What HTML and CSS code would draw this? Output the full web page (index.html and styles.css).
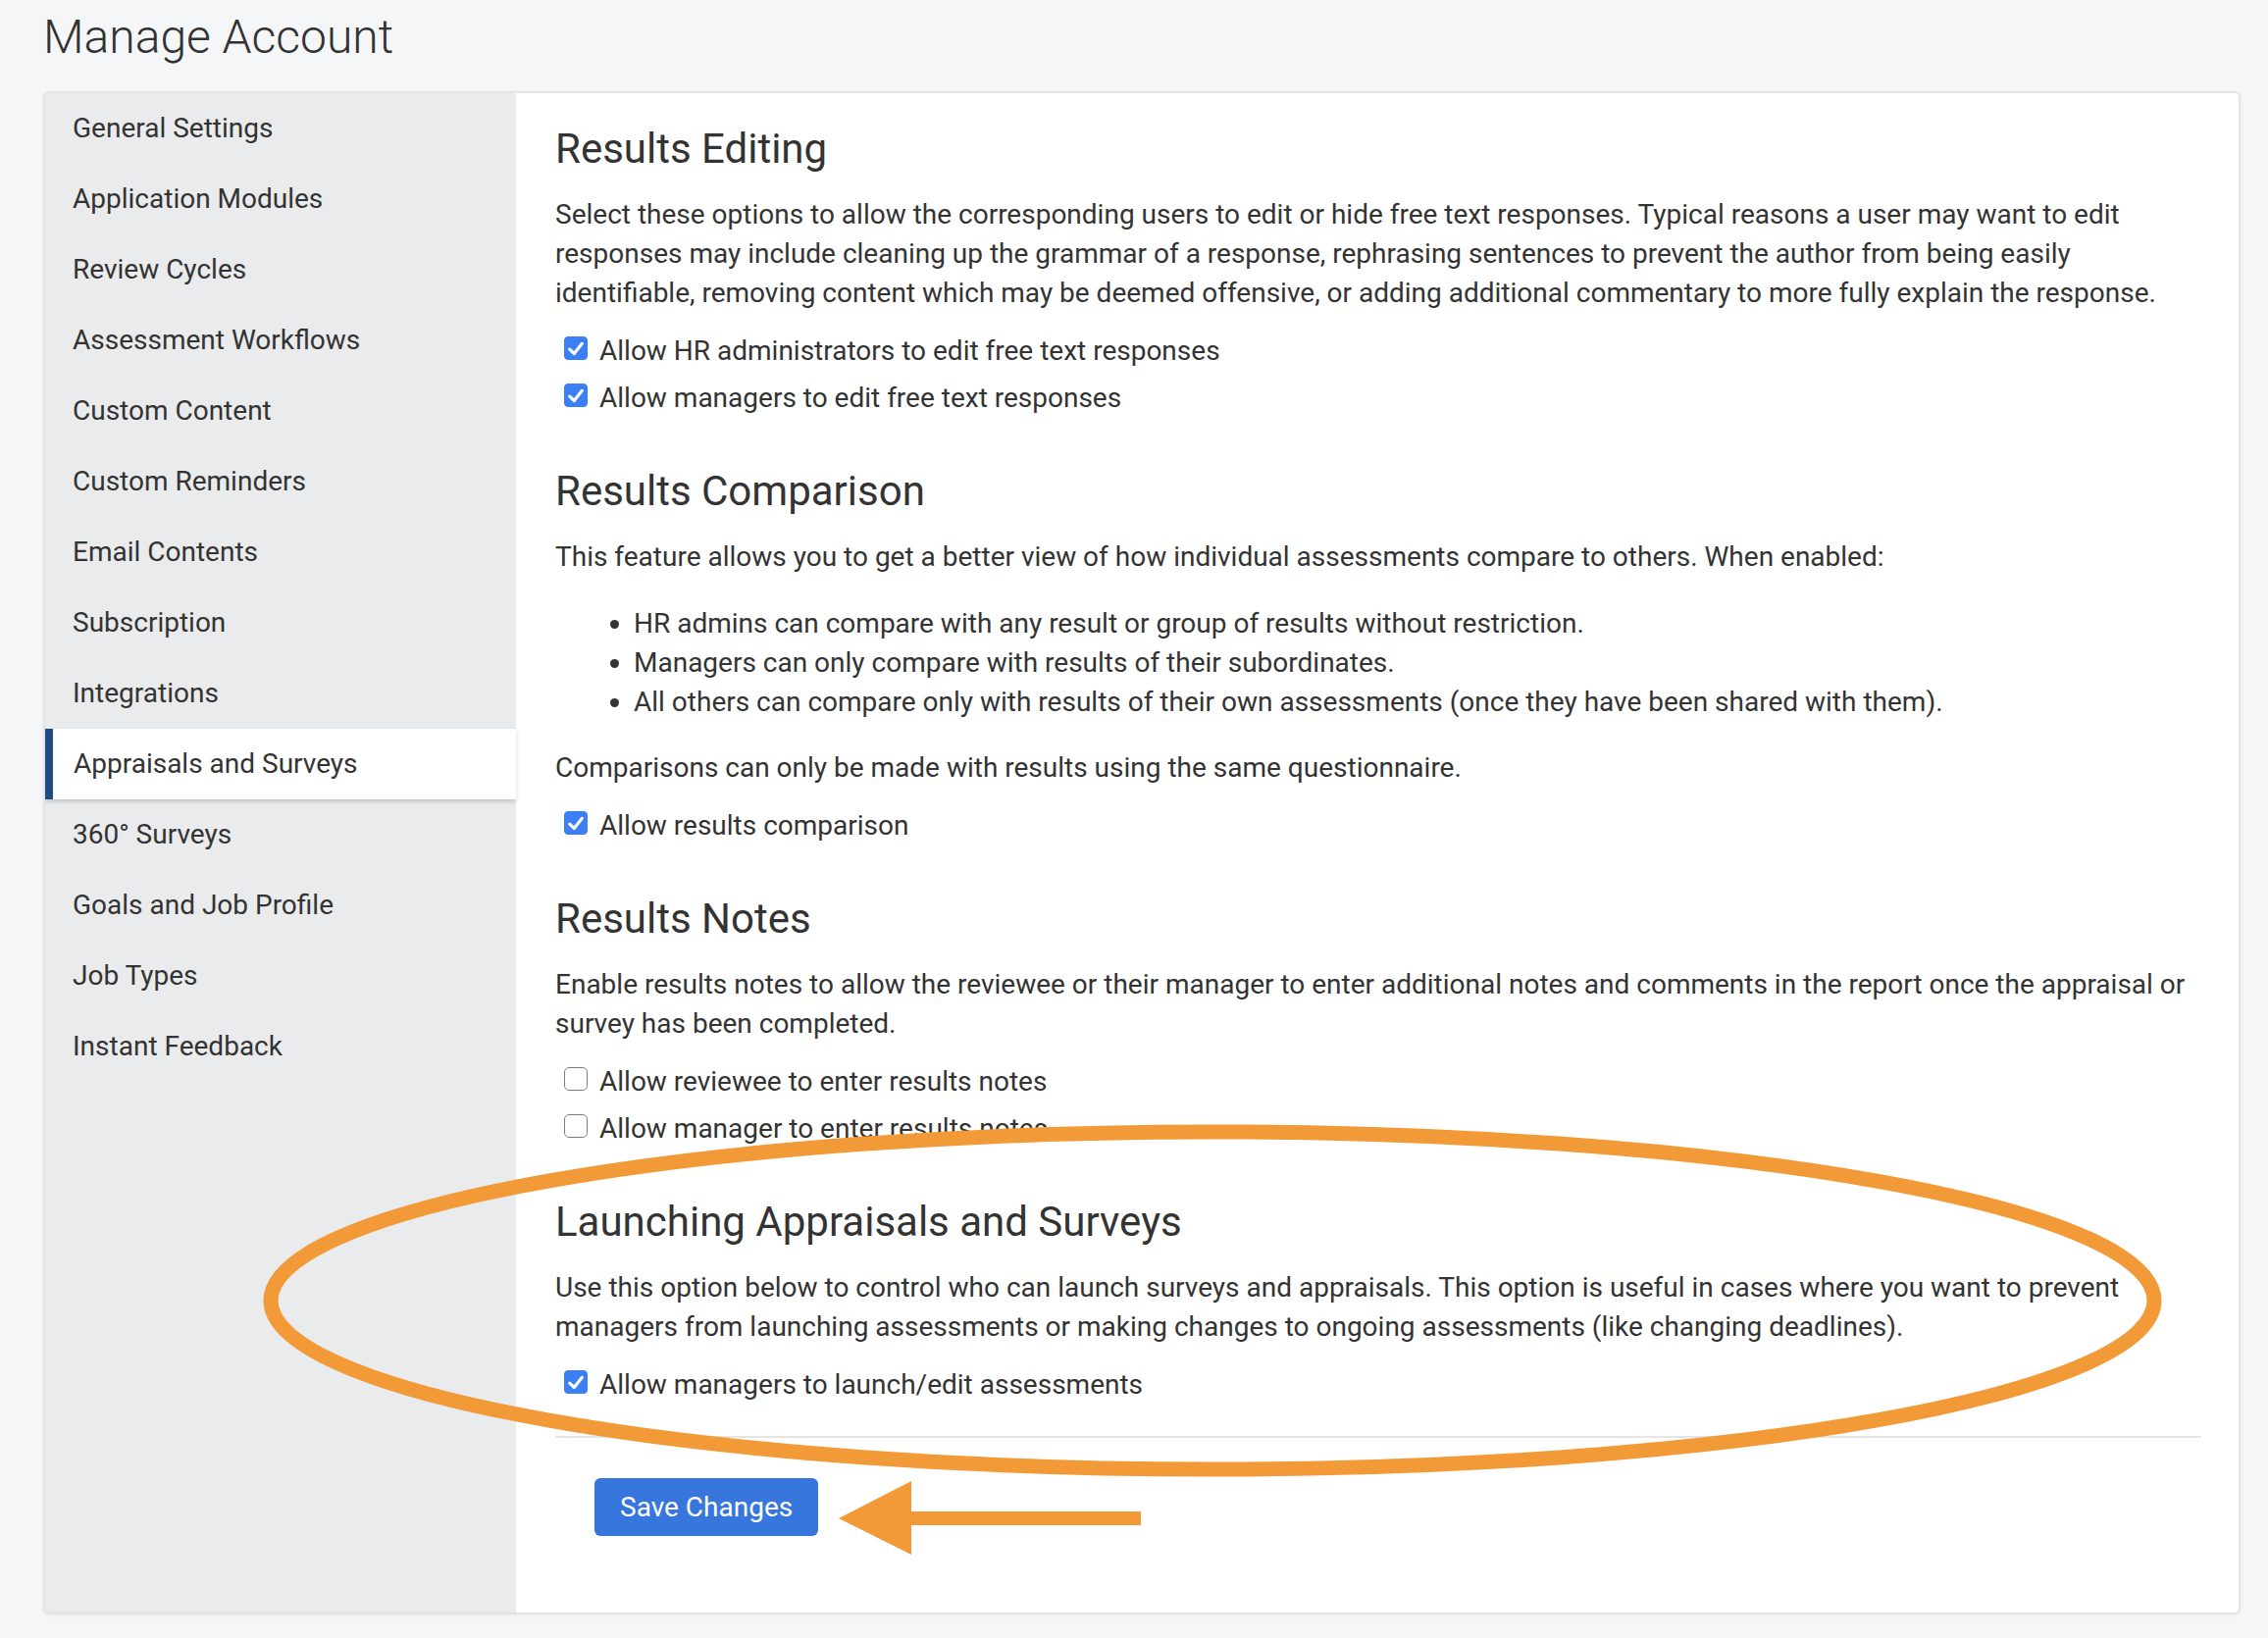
FILE: index.html
```html
<!DOCTYPE html>
<html lang="en">
<head>
    <meta charset="UTF-8">
    <meta name="viewport" content="width=device-width, initial-scale=1.0">
    <title>Manage Account</title>
    <link rel="stylesheet" href="styles.css">
</head>
<body>
    <div class="page">
        <h1 class="page-title">Manage Account</h1>

        <div class="account-card">
            <!-- Settings navigation -->
            <ul class="side-nav">
                <li>General Settings</li>
                <li>Application Modules</li>
                <li>Review Cycles</li>
                <li>Assessment Workflows</li>
                <li>Custom Content</li>
                <li>Custom Reminders</li>
                <li>Email Contents</li>
                <li>Subscription</li>
                <li>Integrations</li>
                <li class="active">Appraisals and Surveys</li>
                <li>360° Surveys</li>
                <li>Goals and Job Profile</li>
                <li>Job Types</li>
                <li>Instant Feedback</li>
            </ul>

            <div class="settings">
                <section class="block">
                    <h2>Results Editing</h2>
                    <p>Select these options to allow the corresponding users to edit or hide free text responses. Typical reasons a user may want to edit responses may include cleaning up the grammar of a response, rephrasing sentences to prevent the author from being easily identifiable, removing content which may be deemed offensive, or adding additional commentary to more fully explain the response.</p>
                    <div class="checks">
                        <label class="check"><span class="box checked"><svg viewBox="0 0 16 16"><path d="M3.4 8.8 L6.8 12 L12.6 4.6"/></svg></span>Allow HR administrators to edit free text responses</label>
                        <label class="check"><span class="box checked"><svg viewBox="0 0 16 16"><path d="M3.4 8.8 L6.8 12 L12.6 4.6"/></svg></span>Allow managers to edit free text responses</label>
                    </div>
                </section>

                <section class="block">
                    <h2>Results Comparison</h2>
                    <p>This feature allows you to get a better view of how individual assessments compare to others. When enabled:</p>
                    <ul class="rules">
                        <li>HR admins can compare with any result or group of results without restriction.</li>
                        <li>Managers can only compare with results of their subordinates.</li>
                        <li>All others can compare only with results of their own assessments (once they have been shared with them).</li>
                    </ul>
                    <p>Comparisons can only be made with results using the same questionnaire.</p>
                    <div class="checks">
                        <label class="check"><span class="box checked"><svg viewBox="0 0 16 16"><path d="M3.4 8.8 L6.8 12 L12.6 4.6"/></svg></span>Allow results comparison</label>
                    </div>
                </section>

                <section class="block">
                    <h2>Results Notes</h2>
                    <p>Enable results notes to allow the reviewee or their manager to enter additional notes and comments in the report once the appraisal or survey has been completed.</p>
                    <div class="checks">
                        <label class="check"><span class="box"></span>Allow reviewee to enter results notes</label>
                        <label class="check"><span class="box"></span>Allow manager to enter results notes</label>
                    </div>
                </section>

                <section class="block">
                    <h2>Launching Appraisals and Surveys</h2>
                    <p>Use this option below to control who can launch surveys and appraisals. This option is useful in cases where you want to prevent managers from launching assessments or making changes to ongoing assessments (like changing deadlines).</p>
                    <div class="checks">
                        <label class="check"><span class="box checked"><svg viewBox="0 0 16 16"><path d="M3.4 8.8 L6.8 12 L12.6 4.6"/></svg></span>Allow managers to launch/edit assessments</label>
                    </div>
                </section>

                <hr>

                <div class="actions">
                    <button type="button" class="btn-save">Save Changes</button>
                </div>
            </div>
        </div>
    </div>

    <!-- Hand-drawn highlight on top of the page -->
    <svg class="markup" width="2312" height="1670" viewBox="0 0 2312 1670">
        <ellipse cx="1236" cy="1326" rx="960" ry="172" fill="none" stroke="#f19a37" stroke-width="15"/>
        <polygon points="855,1548 929,1510 929,1585" fill="#f19a37"/>
        <rect x="927" y="1541" width="236" height="14" fill="#f19a37"/>
    </svg>
</body>
</html>
```

FILE: styles.css
```css
body {
    margin: 0;
    background: #f5f6f8;
    font-family: Roboto, "Liberation Sans", sans-serif;
    color: #333;
    position: relative;
    min-height: 1670px;
}

.page {
    padding: 10px 28px 0 44px;
}

.page-title {
    font-size: 48px;
    font-weight: 300;
    line-height: 56px;
    margin: 0 0 27px;
}

.account-card {
    display: flex;
    background: #fff;
    border: 2px solid #e3e4e6;
    border-radius: 6px;
    overflow: hidden;
    box-shadow: 0 1px 4px rgba(0, 0, 0, 0.05);
}

/* Left menu */
.side-nav {
    flex: none;
    width: 480px;
    margin: 0;
    padding: 0;
    list-style: none;
    background: #eaebed;
}

.side-nav li {
    height: 72px;
    line-height: 72px;
    padding-left: 28px;
    font-size: 28px;
}

.side-nav li.active {
    position: relative;
    background: #fff;
    border-left: 8px solid #204a85;
    padding-left: 21px;
    box-shadow: 0 2px 4px rgba(0, 0, 0, 0.18);
}

/* Settings column */
.settings {
    flex: 1;
    padding: 32px 38px 78px 40px;
}

.block + .block {
    margin-top: 51px;
}

.settings h2 {
    font-size: 42px;
    font-weight: 400;
    line-height: 50px;
    margin: 0 0 22px;
}

.settings p {
    font-size: 28px;
    line-height: 40px;
    margin: 0 0 18px;
}

.rules {
    font-size: 28px;
    line-height: 40px;
    margin: 28px 0 27px;
    padding-left: 80px;
}

.checks {
    display: flex;
    flex-direction: column;
    gap: 8px;
}

.check {
    display: flex;
    align-items: center;
    gap: 12px;
    height: 40px;
    padding-left: 9px;
    font-size: 28px;
}

.box {
    flex: none;
    width: 22px;
    height: 22px;
    margin-top: -4px;
    border: 1.5px solid #7d7d7d;
    border-radius: 5px;
    background: #fff;
}

.box.checked {
    background: #3a7ff5;
    border-color: #3a7ff5;
    border-radius: 4px;
}

.box svg {
    display: block;
    width: 22px;
    height: 22px;
}

.box svg path {
    fill: none;
    stroke: #fff;
    stroke-width: 2.3;
    stroke-linecap: round;
    stroke-linejoin: round;
}

.settings hr {
    border: 0;
    height: 2px;
    background: #e5e5e5;
    margin: 33px 0 41px;
}

.actions {
    padding-left: 40px;
}

.btn-save {
    height: 59px;
    padding: 0 26px;
    border: 0;
    border-radius: 6px;
    background: #3776dd;
    color: #fff;
    font-family: Roboto, "Liberation Sans", sans-serif;
    font-size: 28px;
    cursor: pointer;
}

/* Annotation overlay */
.markup {
    position: absolute;
    top: 0;
    left: 0;
    pointer-events: none;
}
```
